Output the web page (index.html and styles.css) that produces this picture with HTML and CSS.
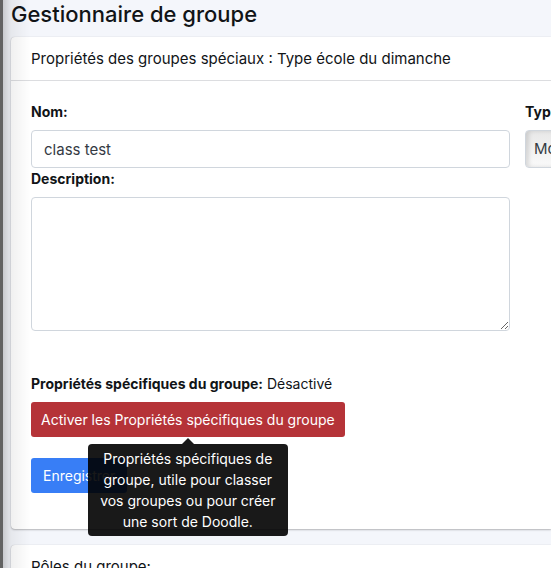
FILE: index.html
```html
<!DOCTYPE html>
<html lang="fr">
<head>
<meta charset="utf-8">
<title>Gestionnaire de groupe</title>
<link rel="stylesheet" href="styles.css">
</head>
<body>
<main class="content">
  <h1 class="title">Gestionnaire de groupe</h1>
  <section class="card">
    <h2 class="card-header">Propriétés des groupes spéciaux : Type école du dimanche</h2>
    <form class="card-body">
      <div class="fields">
        <div class="field">
          <label class="label" for="name">Nom:</label>
          <input class="control" id="name" type="text" value="class test">
        </div>
        <div class="field">
          <label class="label" for="type">Type:</label>
          <select class="control select" id="type"><option>Mo</option></select>
        </div>
        <div class="field">
          <label class="label" for="description">Description:</label>
          <textarea class="control area" id="description"></textarea>
        </div>
      </div>
      <p class="status"><b>Propriétés spécifiques du groupe:</b> Désactivé</p>
      <div class="activate">
        <button class="btn danger" type="button" aria-describedby="tip">Activer les Propriétés spécifiques du groupe</button>
        <div class="tooltip" id="tip" role="tooltip">Propriétés spécifiques de groupe, utile pour classer vos groupes ou pour créer une sort de Doodle.</div>
      </div>
      <button class="btn primary" type="submit">Enregistrer</button>
    </form>
  </section>
  <section class="card">
    <h2 class="card-header">Rôles du groupe:</h2>
  </section>
</main>
</body>
</html>
```
FILE: styles.css
```css
* {
  box-sizing: border-box;
}

html {
  height: 100%;
  overflow: hidden;
}

body {
  height: 100%;
  margin: 0;
  overflow: hidden;
  border-left: 3px solid #626262;
  background: #f4f6fb;
  color: #111417;
  font: 14px/21px Inter, sans-serif;
}

/* Shadow cast by the sidebar on the page */
body::after {
  content: "";
  position: absolute;
  top: 0;
  bottom: 0;
  left: 3px;
  width: 28px;
  background: linear-gradient(to right, rgba(0, 0, 0, 0.18), rgba(0, 0, 0, 0.06) 8px, rgba(0, 0, 0, 0));
  pointer-events: none;
}

.content {
  padding-left: 8px;
}

.title {
  margin: 0 0 8px;
  font-size: 22px;
  font-weight: 500;
  line-height: 29px;
}

.card {
  margin-bottom: 16px;
  border-radius: 4px 0 0 4px;
  background: #fff;
  box-shadow: 0 0 1px rgba(0, 0, 0, 0.2), 0 1px 2px rgba(0, 0, 0, 0.25);
}

.card-header {
  margin: 0;
  padding: 10px 20px;
  border-bottom: 1px solid #dcdde0;
  font-size: 15px;
  font-weight: 400;
  line-height: 23px;
}

.card-body {
  padding: 20px 0 36px 20px;
}

.fields {
  display: grid;
  grid-template-columns: minmax(0, 1fr) 26px;
  column-gap: 15px;
  margin-bottom: 42px;
}

.label {
  display: block;
  margin-bottom: 8px;
  font-weight: 700;
}

.control {
  display: block;
  width: 100%;
  height: 38px;
  padding: 0 12px;
  border: 1px solid #d0d6dd;
  border-radius: 4px;
  background: #fff;
  color: #343a43;
  font: 15px/22px Inter, sans-serif;
}

.select {
  width: 240px;
  padding: 0 8px;
  appearance: none;
  background: linear-gradient(#e8e8e8, #fafafa);
  box-shadow: inset 3px 0 4px rgba(0, 0, 0, 0.12);
}

.area {
  height: 134px;
  resize: vertical;
}

.status {
  margin: 0 0 8px;
}

.status b {
  font-weight: 700;
}

.activate {
  position: relative;
  width: max-content;
  margin-bottom: 21px;
}

.btn {
  display: block;
  padding: 7px 10px;
  border: 0;
  border-radius: 3px;
  color: #fff;
  font: 14px/21px Inter, sans-serif;
}

.danger {
  background: #b53338;
}

.primary {
  padding: 7px 12px;
  background: #387ef6;
}

.tooltip {
  position: absolute;
  top: calc(100% + 7px);
  left: calc(50% - 100px);
  width: 200px;
  padding: 4px 8px;
  border-radius: 4px;
  background: rgba(0, 0, 0, 0.9);
  color: #fff;
  text-align: center;
}

.tooltip::before {
  content: "";
  position: absolute;
  bottom: 100%;
  left: calc(50% - 6px);
  border: 6px solid transparent;
  border-top: 0;
  border-bottom-color: rgba(0, 0, 0, 0.9);
}
```
